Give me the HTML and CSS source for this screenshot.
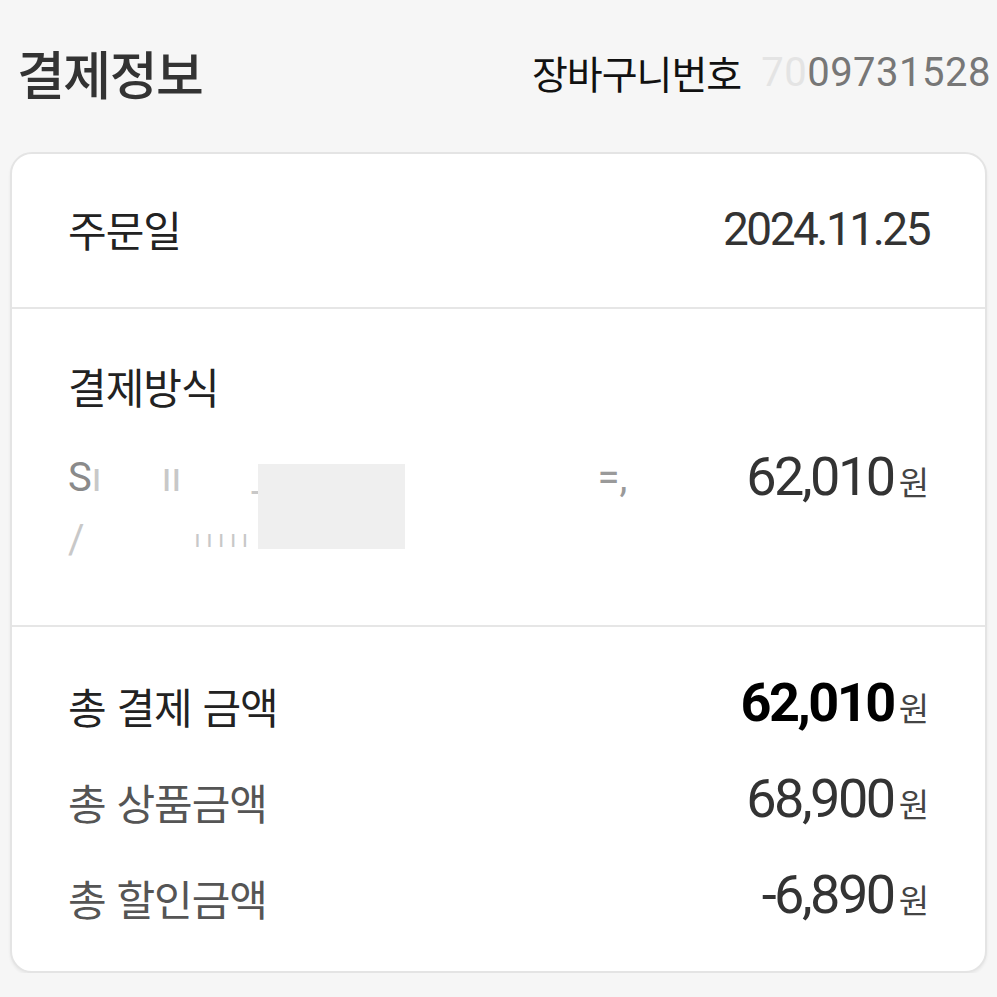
FILE: index.html
```html
<!DOCTYPE html>
<html lang="ko">

<head>
    <meta charset="UTF-8">
    <meta name="viewport" content="width=device-width, initial-scale=1.0">
    <title>결제정보</title>
    <link rel="stylesheet" href="styles.css">
</head>

<body>
    <div class="head">
        <h1 class="title">결제정보</h1>
        <div class="cart-no">
            <span class="cart-label">장바구니번호</span>
            <span class="cart-num"><span class="erased">70</span>09731528</span>
        </div>
    </div>

    <div class="card">
        <div class="row row-date">
            <span class="label">주문일</span>
            <span class="date">2024.11.25</span>
        </div>

        <div class="row-pay">
            <div class="label pay-title">결제방식</div>
            <div class="pay-body">
                <div class="pay-detail">
                    <div class="pay-line">
                        <span class="faint">S</span><span class="trace">ı</span>
                        <span class="trace gap1">ıı</span>
                        <span class="trace gap2">_ _</span>
                        <span class="trace gap3">=,</span>
                    </div>
                    <div class="pay-line">
                        <span class="trace">/</span>
                        <span class="trace gap4">ı ı ı ı ı</span>
                    </div>
                    <div class="redact"></div>
                </div>
                <div class="money">
                    <span class="num">62,010</span><span class="won">원</span>
                </div>
            </div>
        </div>

        <div class="row-sum">
            <div class="sum-line">
                <span class="label">총 결제 금액</span>
                <span class="money"><span class="num strong">62,010</span><span class="won">원</span></span>
            </div>
            <div class="sum-line sub">
                <span class="label">총 상품금액</span>
                <span class="money"><span class="num">68,900</span><span class="won">원</span></span>
            </div>
            <div class="sum-line sub">
                <span class="label">총 할인금액</span>
                <span class="money"><span class="num">-6,890</span><span class="won">원</span></span>
            </div>
        </div>
    </div>
</body>

</html>
```

FILE: styles.css
```css
* {
    margin: 0;
    padding: 0;
    box-sizing: border-box;
}

body {
    background-color: #f6f6f6;
    font-family: "Noto Sans CJK KR", "Noto Sans", sans-serif;
    color: #222;
    overflow: hidden;
}

.head {
    height: 152px;
    display: flex;
    align-items: center;
    justify-content: space-between;
    padding: 0 6px 8px 17px;
    white-space: nowrap;
}

.title {
    font-size: 52px;
    font-weight: 500;
    color: #333;
    letter-spacing: -1.5px;
}

.cart-no {
    display: flex;
    align-items: center;
    white-space: nowrap;
}

.cart-label {
    font-size: 39px;
    color: #111;
    letter-spacing: -1px;
}

.cart-num {
    font-family: Roboto, sans-serif;
    font-size: 40px;
    color: #777;
    margin-left: 20px;
    letter-spacing: 0.5px;
}

.cart-num .erased {
    color: #e4e4e4;
}

.card {
    margin: 0 10px;
    background: #fff;
    border: 2px solid #e4e4e4;
    border-radius: 22px;
    box-shadow: 0 2px 3px rgba(0, 0, 0, 0.06);
}

.label {
    font-size: 42px;
    letter-spacing: -1px;
}

.row {
    display: flex;
    align-items: center;
    justify-content: space-between;
}

.row-date {
    height: 155px;
    padding: 0 56px 4px 56px;
    border-bottom: 2px solid #e6e6e6;
}

.date {
    font-family: Roboto, sans-serif;
    font-size: 46px;
    color: #333;
    letter-spacing: -2.5px;
}

.row-pay {
    height: 318px;
    padding: 47px 56px 0 56px;
    border-bottom: 2px solid #e6e6e6;
}

.pay-title {
    line-height: 60px;
}

.pay-body {
    display: flex;
    justify-content: space-between;
    align-items: flex-start;
    margin-top: 30px;
}

.pay-detail {
    position: relative;
    width: 560px;
}

.pay-line {
    height: 62px;
    display: flex;
    align-items: center;
    font-family: Roboto, sans-serif;
    font-size: 40px;
}

.faint {
    color: #8a8a8a;
}

.trace {
    color: #c8c8c8;
}

.gap1 {
    margin-left: 60px;
}

.gap2 {
    margin-left: 70px;
}

.gap3 {
    margin-left: 300px;
    color: #9a9a9a;
}

.gap4 {
    margin-left: 110px;
    font-size: 24px;
}

.redact {
    position: absolute;
    left: 190px;
    top: 18px;
    width: 147px;
    height: 85px;
    background: #efefef;
}

.money {
    display: flex;
    align-items: baseline;
    line-height: 62px;
}

.num {
    font-family: Roboto, sans-serif;
    font-size: 54px;
    color: #333;
    letter-spacing: -2.5px;
}

.num.strong {
    font-weight: 700;
    color: #000;
}

.won {
    font-size: 33px;
    color: #444;
    margin-left: 5px;
}

.row-sum {
    padding: 30px 56px 26px 56px;
}

.sum-line {
    height: 96px;
    display: flex;
    align-items: center;
    justify-content: space-between;
}

.sum-line.sub .label {
    color: #555;
}
```
